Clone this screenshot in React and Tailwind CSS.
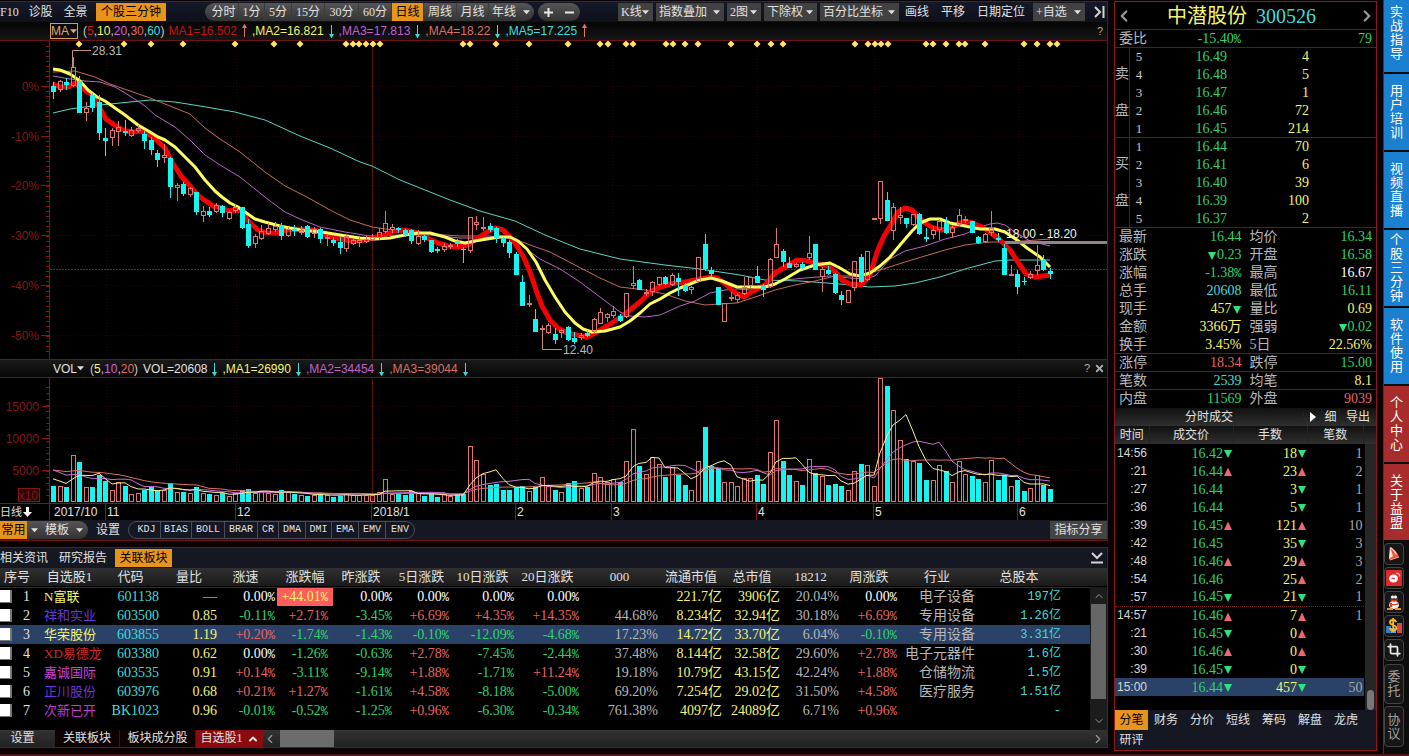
import { ChevronLeft, ChevronRight, ChevronUp, ChevronDown, Crop, X } from 'lucide-react';

// [up/down, high, body top, body bottom, low, volume]
const candles = `
d 82 86 92 99 16|u 80 81 90 92 16|d 78 82 85 90 15|u 57 67 86 87 47|d 76 81 113 113 40|u 102 108 113 121 15
d 93 95 108 112 15|d 95 102 133 140 27|d 128 138 141 156 21|u 128 130 138 146 12|u 121 127 132 146 20|d 120 131 133 136 16
u 127 130 136 137 8|u 125 128 131 133 9|d 131 134 141 149 12|d 137 140 150 155 15|d 150 153 160 167 12|u 144 155 158 163 12
d 157 158 187 198 19|u 183 185 188 201 10|d 182 184 194 196 10|u 187 188 195 197 9|d 192 192 212 215 15|u 206 211 216 222 9
d 207 211 215 217 8|u 203 205 212 213 7|d 205 206 213 217 9|u 210 212 219 220 6|u 204 207 211 213 9|d 207 207 228 229 12
d 219 224 246 248 13|u 234 236 244 248 9|u 225 231 239 240 11|u 223 228 234 235 9|u 222 226 230 232 8|d 223 225 236 240 12
u 227 229 236 237 10|d 225 229 231 236 8|u 226 230 233 235 7|d 225 226 237 238 6|u 227 229 234 238 7|d 228 229 239 243 9
u 234 237 239 246 7|d 237 240 243 246 5|d 237 242 248 254 6|u 235 236 249 252 9|u 238 240 244 245 7|u 237 240 243 247 7
u 236 239 242 243 7|u 234 237 240 241 7|u 228 232 238 240 10|u 211 223 232 233 23|u 224 227 230 233 8|d 227 228 230 233 8
d 229 230 235 237 7|d 229 230 241 244 11|u 230 236 244 245 9|d 235 236 240 242 6|d 240 240 252 253 8|d 247 249 251 253 5
u 243 246 250 252 8|u 243 245 247 249 6|d 239 241 244 247 8|d 247 249 250 263 8|u 217 217 251 253 56|u 216 222 225 230 42
u 217 227 229 231 28|d 223 226 230 232 17|d 227 228 238 243 18|d 237 238 243 247 12|d 240 242 253 258 12|d 252 254 275 275 15
d 275 282 306 306 16|u 295 303 305 307 11|d 309 319 332 332 15|u 325 328 329 333 25|u 323 325 333 334 16|d 328 334 340 344 12
u 329 330 333 338 10|d 326 327 340 341 19|d 332 338 342 344 21|u 333 335 338 340 14|d 330 333 336 337 15|u 318 319 332 333 29
u 308 312 324 324 25|u 313 314 318 322 20|u 306 311 316 318 23|d 314 316 321 322 20|u 293 293 317 318 41|u 266 283 286 289 73
d 279 280 290 290 36|u 289 292 294 296 28|u 281 282 292 296 45|u 277 277 285 286 38|d 276 277 284 285 25|u 273 275 285 286 35
d 273 278 282 296 27|d 283 285 291 292 17|u 286 287 290 294 12|u 257 257 282 282 41|d 234 244 269 271 75|d 267 270 274 276 36
d 287 287 305 305 34|u 303 303 322 322 20|u 292 297 299 301 20|u 293 295 300 303 16|u 277 287 294 295 24|u 277 277 286 288 24
d 266 276 283 283 27|d 284 286 290 297 18|u 258 259 287 288 50|u 228 244 258 258 82|d 249 251 262 267 41|d 257 263 268 268 27
u 263 264 267 268 21|d 262 264 268 269 17|u 236 253 258 260 43|d 244 244 270 270 29|u 267 269 277 292 26|d 266 270 274 275 17
d 273 274 293 294 18|d 291 295 300 305 16|u 290 290 303 303 12|u 261 261 288 291 31|d 254 257 282 283 38|u 251 251 280 281 37
u 218 218 219 219 16|u 181 181 219 224 124|d 192 200 221 221 116|u 203 207 231 240 92|u 207 215 218 224 62|d 218 218 224 228 43
u 214 214 225 226 41|d 213 214 234 235 39|d 228 237 239 242 22|u 226 230 235 239 22|u 219 221 230 240 37|d 217 223 233 234 31
u 225 227 233 238 20|u 209 215 225 226 41|u 216 219 221 223 28|d 221 221 233 233 26|d 236 237 243 244 23|u 233 234 242 243 20
u 211 228 233 236 42|d 233 238 240 242 22|d 244 248 275 275 27|u 265 274 275 276 16|d 270 274 287 294 22|d 277 281 282 285 11
u 271 274 278 279 14|u 245 265 271 275 27|d 255 260 270 271 17|d 268 271 274 279 13`
  .trim()
  .split(/[|\n]/)
  .map((row, i) => {
    const [dir, ...n] = row.split(' ');
    const [high, top, bottom, low, vol] = n.map(Number);
    return { x: Math.round(53 + 6.515 * i), up: dir === 'u', high, top, bottom, low, vol };
  });

const priceLines = [
  { color: '#58d6c4', width: 1, points: '53,113 70,109 85,107 100,105 130,102 150,100 175,102 200,106 235,112 265,120 300,136 330,148 360,162 372,166 400,180 420,188 450,200 480,211 515,221 545,235 580,249 620,259 665,265 700,269 740,275 765,280 800,281 840,284 870,287 895,286 915,283 940,277 965,269 995,261 1010,260 1050,260' },
  { color: '#c86a5e', width: 1, points: '53,72 75,71 95,77 110,84 130,91 150,98 165,104 190,114 205,128 220,139 240,152 265,172 285,186 305,196 330,210 350,220 372,227 400,231 430,234 460,236 490,236 515,239 530,245 550,252 575,265 600,278 620,287 645,290 665,294 685,301 705,305 720,304 737,303 755,297 775,290 795,285 815,281 835,276 860,276 880,270 905,262 925,256 945,250 965,245 990,242 1010,242 1050,239' },
  { color: '#b765c6', width: 1, points: '53,76 70,79 85,81 100,82 115,87 130,96 145,106 155,115 175,127 190,140 205,155 220,165 240,177 255,189 270,201 285,212 300,219 320,227 345,232 370,236 400,235 430,235 460,238 480,238 500,236 512,238 525,248 540,259 560,269 580,282 600,297 620,312 630,316 645,317 660,315 680,306 695,301 710,293 725,290 738,289 750,290 765,288 785,280 805,278 830,276 850,278 865,279 875,276 890,259 905,251 925,246 945,239 965,234 980,227 990,224 997,223 1005,225 1015,232 1030,241 1050,246' },
  { color: '#f50000', width: 5, points: '53,84 60,87 68,87 75,83 82,88 92,95 97,103 102,112 106,119 113,124 119,128 126,131 133,132 140,131 147,133 155,139 165,148 172,162 181,176 191,187 196,193 200,197 206,201 213,206 222,208 229,211 235,210 242,211 248,221 258,230 267,233 277,233 287,230 295,229 305,230 315,230 327,236 340,239 352,241 365,240 372,238 382,236 395,231 405,230 418,233 427,238 438,243 448,246 458,247 468,245 478,238 487,232 495,228 503,230 510,237 517,246 524,258 530,272 536,290 542,306 550,320 558,328 567,333 577,335 587,337 597,332 607,326 618,319 630,310 641,301 650,292 660,287 670,284 685,282 700,279 710,277 717,278 727,285 734,292 744,297 755,290 765,285 775,273 785,267 797,260 808,261 818,264 828,266 835,272 842,280 850,284 861,285 870,275 877,252 884,236 892,223 898,212 905,208 912,210 918,217 925,223 933,228 942,230 952,227 960,223 970,222 982,227 990,232 1000,240 1010,250 1018,262 1026,274 1035,277 1050,275' },
  { color: '#ffff60', width: 3, points: '53,69 60,70 70,74 80,81 88,90 97,97 105,101 115,108 125,115 138,125 150,132 158,137 165,140 175,147 185,157 195,167 205,180 215,191 222,197 230,203 238,207 245,212 255,219 265,222 280,226 300,230 322,232 340,235 360,238 375,239 390,238 405,235 418,233 430,233 445,237 455,241 465,243 475,241 487,239 500,237 510,237 518,241 527,249 536,262 545,280 555,297 565,312 575,323 583,329 592,332 605,331 620,327 630,321 640,313 650,304 660,299 670,293 680,288 690,284 700,280 711,278 722,281 737,287 750,287 765,287 775,284 785,279 800,270 815,265 830,263 840,268 850,274 860,276 870,273 880,266 890,257 900,245 912,231 920,223 930,219 940,219 950,223 965,226 980,229 995,229 1005,232 1017,240 1027,248 1040,257 1050,267' },
];

// volumes before the first visible day, so the averages start at the left edge
const earlier = [32, 32, 32, 32, 32, 32, 32, 32, 32, 32, 41, 41, 41, 41, 40, 28, 26, 24, 22];
const volumes = [...earlier, ...candles.map((c) => c.vol)];

const volumeAverage = (days) =>
  candles
    .map((c, i) => {
      const end = i + earlier.length + 1;
      const sum = volumes.slice(end - days, end).reduce((a, b) => a + b, 0);
      return `${c.x},${(502 - sum / days).toFixed(1)}`;
    })
    .join(' ');

const diamonds = [79, 124, 151, 183, 235, 274, 300, 346, 353, 359, 366, 373, 380, 463, 470, 496, 529, 568, 600, 608, 626, 633, 666, 673, 685, 698, 731, 757, 771, 783, 855, 868, 875, 881, 888, 926, 933, 946, 959, 965, 985, 1024, 1037, 1050, 1057];
const months = [[54, '2017/10'], [107, '11'], [237, '12'], [373, '2018/1'], [517, '2'], [613, '3'], [758, '4'], [875, '5'], [1019, '6']];
const percents = [[86, '0%'], [136, '-10%'], [185, '-20%'], [235, '-30%'], [285, '-40%'], [335, '-50%']];

const periods = [
  ['分时', 'w-[34px]'], ['1分', 'w-[26px]'], ['5分', 'w-[27px]'], ['15分', 'w-[33px]'],
  ['30分', 'w-[34px]'], ['60分', 'w-[33px]'], ['日线', 'w-8'], ['周线', 'w-[33px]'], ['月线', 'w-8'],
];
const indicators = [
  ['KDJ', 'w-[31px]'], ['BIAS', 'w-[31px]'], ['BOLL', 'w-[33px]'], ['BRAR', 'w-[33px]'], ['CR', 'w-[21px]'],
  ['DMA', 'w-[27px]'], ['DMI', 'w-[26px]'], ['EMA', 'w-[27px]'], ['EMV', 'w-[27px]'], ['ENV', 'w-[29px]'],
];

const columns = [
  ['量比', 'w-[58px]'], ['涨速', 'w-[55px]'], ['涨跌幅', 'w-14'], ['昨涨跌', 'w-16'], ['5日涨跌', 'w-[57px]'],
  ['10日涨跌', 'w-[65px]'], ['20日涨跌', 'w-[65px]'], ['000', 'w-[79px]'], ['流通市值', 'w-16'], ['总市值', 'w-[58px]'],
  ['18212', 'w-[59px]'], ['周涨跌', 'w-[58px]'], ['行业', 'w-[78px]'], ['总股本', 'w-[86px]'],
];

const stocks = [
  ['N富联', 'text-[#f4f470]', '601138', '—', '0.00%', '+44.01%', '0.00%', '0.00%', '0.00%', '0.00%', '', '221.7亿', '3906亿', '20.04%', '0.00%', '电子设备', '197亿'],
  ['祥和实业', 'text-[#6a35d8]', '603500', '0.85', '-0.11%', '+2.71%', '-3.45%', '+6.69%', '+4.35%', '+14.35%', '44.68%', '8.234亿', '32.94亿', '30.18%', '+6.69%', '专用设备', '1.26亿'],
  ['华荣股份', 'text-[#f4f470]', '603855', '1.19', '+0.20%', '-1.74%', '-1.43%', '-0.10%', '-12.09%', '-4.68%', '17.23%', '14.72亿', '33.70亿', '6.04%', '-0.10%', '专用设备', '3.31亿'],
  ['XD易德龙', 'text-[#d02a2a]', '603380', '0.62', '0.00%', '-1.26%', '-0.63%', '+2.78%', '-7.45%', '-2.44%', '37.48%', '8.144亿', '32.58亿', '29.60%', '+2.78%', '电子元器件', '1.6亿'],
  ['嘉诚国际', 'text-[#d040d8]', '603535', '0.91', '+0.14%', '-3.11%', '-9.14%', '+1.88%', '-1.71%', '+11.24%', '19.18%', '10.79亿', '43.15亿', '42.24%', '+1.88%', '仓储物流', '1.5亿'],
  ['正川股份', 'text-[#6a35d8]', '603976', '0.68', '+0.21%', '+1.27%', '-1.61%', '+4.58%', '-8.18%', '-5.00%', '69.20%', '7.254亿', '29.02亿', '31.50%', '+4.58%', '医疗服务', '1.51亿'],
  ['次新已开', 'text-[#c03ad0]', 'BK1023', '0.96', '-0.01%', '-0.52%', '-1.25%', '+0.96%', '-6.30%', '-0.34%', '761.38%', '4097亿', '24089亿', '6.71%', '+0.96%', '', '-'],
];

const asks = [['5', '16.49', '4'], ['4', '16.48', '5'], ['3', '16.47', '1'], ['2', '16.46', '72'], ['1', '16.45', '214']];
const bids = [['1', '16.44', '70'], ['2', '16.41', '6'], ['3', '16.40', '39'], ['4', '16.39', '100'], ['5', '16.37', '2']];

const GREEN = 'text-[#2fd36c]';
const RED = 'text-[#e86464]';
const YELLOW = 'text-[#f4f470]';
const CYAN = 'text-[#3fdcdc]';

const stats = [
  ['最新', '16.44', GREEN, '均价', '16.34', GREEN],
  ['涨跌', '▼0.23', GREEN, '开盘', '16.58', GREEN],
  ['涨幅', '-1.38%', GREEN, '最高', '16.67', 'text-white'],
  ['总手', '20608', CYAN, '最低', '16.11', GREEN],
  ['现手', '457▼', YELLOW, '量比', '0.69', YELLOW],
  ['金额', '3366万', YELLOW, '强弱', '▼0.02', GREEN],
  ['换手', '3.45%', YELLOW, '5日', '22.56%', YELLOW],
  ['涨停', '18.34', RED, '跌停', '15.00', GREEN],
  ['笔数', '2539', CYAN, '均笔', '8.1', YELLOW],
  ['内盘', '11569', GREEN, '外盘', '9039', RED],
];

const trades = [
  ['14:56', '16.42', 'd', '18', 'd', '1'],
  [':21', '16.44', 'u', '23', 'u', '2'],
  [':27', '16.44', '', '3', 'd', '1'],
  [':36', '16.44', '', '5', 'd', '1'],
  [':39', '16.45', 'u', '121', 'u', '10'],
  [':42', '16.45', '', '35', 'd', '3'],
  [':48', '16.46', 'u', '29', 'u', '3'],
  [':54', '16.46', '', '25', 'u', '2'],
  [':57', '16.45', 'd', '21', 'd', '1'],
  ['14:57', '16.46', 'u', '7', 'u', '1'],
  [':21', '16.45', 'd', '0', 'u', ''],
  [':30', '16.46', 'u', '0', 'u', ''],
  [':39', '16.45', 'd', '0', 'd', ''],
  ['15:00', '16.44', 'd', '457', 'd', '50'],
];

function tone(value) {
  if (value.startsWith('+')) return RED;
  if (value.startsWith('-')) return GREEN;
  return 'text-white';
}

// narrow percent sign used by the change columns
function Change({ value }) {
  return (
    <>
      {value.replace('%', '')}
      <span className="font-['Liberation_Mono',monospace] text-xs">%</span>
    </>
  );
}

function Tri({ dir }) {
  if (!dir) return <span className="inline-block w-2.5" />;
  return (
    <svg viewBox="0 0 10 10" className="inline-block w-2.5 h-2.5">
      {dir === 'u' ? <path d="M5 0.5 9 9H1z" fill="#e86a70" /> : <path d="M1 1h8L5 9z" fill="#2fe37c" />}
    </svg>
  );
}

function Caret({ className = '' }) {
  return (
    <svg viewBox="0 0 8 5" className={`w-[7px] h-[5px] pointer-events-none ${className}`}>
      <path d="M0 0h8L4 4.5z" fill="currentColor" />
    </svg>
  );
}

function Drop({ text, className }) {
  return (
    <span className={`relative flex items-center h-[18px] ${className}`}>
      <select aria-label={text} className="appearance-none w-full bg-transparent pl-[3px] leading-[18px] outline-none">
        <option>{text}</option>
      </select>
      <Caret className="absolute right-1" />
    </span>
  );
}

function Trend({ up }) {
  return (
    <svg viewBox="0 0 15 16" className="w-[15px] h-4">
      <g transform={up ? undefined : 'rotate(180 7.5 8)'} stroke={up ? '#e07070' : '#40d8d8'} fill={up ? '#e07070' : '#40d8d8'}>
        <path d="M7.5 3v11" fill="none" />
        <path d="M7.5 0.5 10 5H5z" stroke="none" />
      </g>
    </svg>
  );
}

function Toolbar() {
  return (
    <div className="flex items-center h-5 overflow-hidden bg-gradient-to-b from-[#151827] to-[#0e101b] text-xs text-[#e0e0e0] whitespace-nowrap">
      <button className="w-[18px]">F10</button>
      <button className="w-[45px]">诊股</button>
      <button className="w-[25px]">全景</button>
      <button className="ml-2 w-[70px] h-[18px] bg-[#e8941c] text-black">个股三分钟</button>
      <div className="ml-[39px] flex items-center h-[18px] rounded-full bg-gradient-to-b from-[#555] to-[#333]">
        {periods.map(([name, width]) => (
          <button
            key={name}
            className={`${width} h-[18px] border-r border-[#3c3c3c] ${name === '日线' ? 'bg-[#e8941c] text-black' : ''} ${name === '分时' ? 'pl-1' : ''}`}
          >
            {name}
          </button>
        ))}
        <Drop text="年线" className="w-[45px]" />
      </div>
      <div className="ml-1 flex items-center w-[42px] h-[18px] rounded-full bg-gradient-to-b from-[#555] to-[#333]">
        <button aria-label="放大" className="flex-1">
          <svg viewBox="0 0 9 9" className="w-[9px] h-[9px] mx-auto"><path d="M4.500 0v9M0 4.500h9" stroke="#e8e8e8" strokeWidth="2" /></svg>
        </button>
        <button aria-label="缩小" className="flex-1">
          <svg viewBox="0 0 9 9" className="w-[9px] h-[9px] mx-auto"><path d="M0 4.500h9" stroke="#e8e8e8" strokeWidth="2" /></svg>
        </button>
      </div>
      <div className="ml-auto flex items-center gap-[3px] [&>span]:bg-[#414141]">
        <Drop text="K线" className="w-[35px]" />
        <Drop text="指数叠加" className="w-[68px]" />
        <Drop text="2图" className="w-[34px]" />
        <Drop text="下除权" className="w-[53px]" />
        <Drop text="百分比坐标" className="w-[79px]" />
      </div>
      <button className="w-9 text-center">画线</button>
      <button className="w-9 text-center">平移</button>
      <button className="w-[60px] text-center">日期定位</button>
      <Drop text="+自选" className="ml-0.5 w-[52px] bg-[#414141]" />
      <button aria-label="收起" className="ml-2 mr-0.5">
        <svg viewBox="0 0 12 12" className="w-3 h-3">
          <path d="M2 1l5 5-5 5M10.5 0v12" stroke="#d4d4d4" strokeWidth="2" fill="none" />
        </svg>
      </button>
    </div>
  );
}

const plain = 'text-[#c8c8c8]';

function PriceHeader() {
  return (
    <div className="flex items-center h-[19px] pl-[50px] pr-1 border-b border-[#6e1416] bg-gradient-to-b from-[#060606] to-[#161616] font-['Liberation_Sans',sans-serif] text-xs whitespace-nowrap">
      <span className="relative flex items-center w-7 h-4 border border-[#d89a5c] text-[#d8a878]">
        <select aria-label="指标" className="appearance-none w-full bg-transparent leading-[14px] outline-none"><option>MA</option></select>
        <Caret className="absolute right-0" />
      </span>
      <span className={`ml-[5px] ${plain}`}>
        (<span className="text-[#d01818]">5</span>,<span className={YELLOW}>10</span>,<span className="text-[#d060e0]">20</span>,
        <span className={RED}>30</span>,<span className={CYAN}>60</span>)
      </span>
      <span className="ml-1 text-[#c01414]">MA1=16.502</span><Trend up />
      <span className={YELLOW}>,MA2=16.821</span><Trend />
      <span className="text-[#c060d0]">,MA3=17.813</span><Trend />
      <span className="text-[#d87068]">,MA4=18.22</span><Trend />
      <span className={CYAN}>,MA5=17.225</span><Trend up />
      <button aria-label="帮助" className="ml-auto text-[#aaa] text-[11px]">?</button>
    </div>
  );
}

function PriceChart() {
  return (
    <svg viewBox="0 41 1107 318" className="block w-full font-['Liberation_Sans',sans-serif] text-xs">
      <g stroke="#240606" strokeDasharray="1 2">
        {percents.map(([y]) => <path key={y} d={`M50 ${y + 0.5}H1107`} />)}
        {months.slice(1).map(([x]) => <path key={x} d={`M${x - 0.5} 41V359`} />)}
      </g>
      <path d="M372.5 41V359" stroke="#5c1014" />
      <path d="M50 269.5H1107" stroke="#8a1c1c" strokeDasharray="2 1" />
      <g stroke="#8a1214">
        <path d="M49.5 41V359" />
        {Array.from({ length: 62 }, (_, i) => <path key={i} d={`M46 ${46.5 + i * 5}h3`} />)}
        {percents.map(([y]) => <path key={y} d={`M41 ${y + 0.5}h8`} />)}
      </g>
      <g fill="#8a1618" textAnchor="end">
        {percents.map(([y, label]) => <text key={y} x="39" y={y + 5}>{label}</text>)}
      </g>
      {priceLines.map((line) => (
        <polyline key={line.color} points={line.points} fill="none" stroke={line.color} strokeWidth={line.width} strokeLinejoin="round" />
      ))}
      <path d="M1005 242.5H1107" stroke="#8f868b" strokeWidth="3" />
      <g shapeRendering="crispEdges">
        {candles.map((c) =>
          c.up ? (
            <g key={c.x} stroke="#e07470" fill="none">
              <path d={`M${c.x + 0.5} ${c.high}V${c.top}M${c.x + 0.5} ${c.bottom}V${c.low}`} />
              <rect x={c.x - 1.5} y={c.top + 0.5} width="4" height={Math.max(c.bottom - c.top - 1, 0.5)} />
            </g>
          ) : (
            <g key={c.x} fill="#14f4f0">
              <rect x={c.x} y={c.high} width="1" height={c.low - c.high} />
              <rect x={c.x - 2} y={c.top} width="5" height={c.bottom - c.top} />
            </g>
          )
        )}
      </g>
      <path d="M72.5 67V50.5H91" stroke="#c88a84" fill="none" />
      <path d="M542.5 330V349.5H562" stroke="#c88a84" fill="none" />
      <g fill="#b9b9b9">
        <text x="92" y="55">28.31</text>
        <text x="563" y="354">12.40</text>
      </g>
      <text x="1006" y="238" fill="#f0f0f0">18.00 - 18.20</text>
      {diamonds.map((x) => <path key={x} d={`M${x} 40.5l3.5 3.5-3.5 3.5-3.5-3.5z`} fill="#ffe566" />)}
    </svg>
  );
}

function VolumeHeader() {
  return (
    <div className="flex items-center h-[19px] pl-[51px] pr-0.5 border-y border-[#6e1416] bg-gradient-to-b from-[#1a1a1a] to-[#080808] font-['Liberation_Sans',sans-serif] text-xs text-[#e0e0e0] whitespace-nowrap">
      <span className="relative flex items-center w-[33px]">
        <select aria-label="指标" className="appearance-none w-full bg-transparent pl-0.5 leading-4 outline-none"><option>VOL</option></select>
        <Caret className="absolute right-0" />
      </span>
      <span className={`ml-1.5 ${plain}`}>
        (<span className={YELLOW}>5</span>,<span className="text-[#d060e0]">10</span>,<span className={RED}>20</span>)
      </span>
      <span className="ml-[5px]">VOL=20608</span><Trend />
      <span className={YELLOW}>,MA1=26990</span><Trend />
      <span className="text-[#c060d0]">,MA2=34454</span><Trend />
      <span className="text-[#d87068]">,MA3=39044</span><Trend />
      <button aria-label="帮助" className="ml-auto text-[#aaa] text-[11px]">?</button>
      <button aria-label="关闭" className="ml-1 text-[#aaa]"><X size={11} strokeWidth={4} /></button>
    </div>
  );
}

function VolumeChart() {
  return (
    <svg viewBox="0 378 1107 142" className="block w-full font-['Liberation_Sans',sans-serif] text-xs">
      <g stroke="#240606" strokeDasharray="1 2">
        {[406, 438, 470].map((y) => <path key={y} d={`M50 ${y + 0.5}H1107`} />)}
        {months.slice(1).map(([x]) => <path key={x} d={`M${x - 0.5} 378V503`} />)}
      </g>
      <path d="M372.5 378V503" stroke="#5c1014" />
      <g stroke="#8a1214">
        <path d="M49.5 378V520M0 503.5H1107" fill="none" />
        {Array.from({ length: 19 }, (_, i) => <path key={i} d={`M46 ${387.5 + i * 6}h3`} />)}
        {[406, 438, 470].map((y) => <path key={y} d={`M42 ${y + 0.5}h7`} />)}
        {months.slice(1).map(([x]) => <path key={x} d={`M${x - 1.5} 504V520`} />)}
        <rect x="18.500" y="488.500" width="21" height="13" fill="#2a0506" />
      </g>
      <g fill="#8a1618" textAnchor="end">
        <text x="39" y="411">15000</text>
        <text x="39" y="443">10000</text>
        <text x="39" y="475">5000</text>
        <text x="38" y="500">x10</text>
      </g>
      <g shapeRendering="crispEdges">
        {candles.map((c) =>
          c.up ? (
            <rect key={c.x} x={c.x - 1.5} y={502.5 - c.vol} width="4" height={c.vol - 1} fill="none" stroke="#e07470" />
          ) : (
            <rect key={c.x} x={c.x - 2} y={502 - c.vol} width="5" height={c.vol} fill="#14f4f0" />
          )
        )}
      </g>
      <g fill="none">
        <polyline points={volumeAverage(20)} stroke="#d87068" />
        <polyline points={volumeAverage(10)} stroke="#cc6ad8" />
        <polyline points={volumeAverage(5)} stroke="#f6f090" />
      </g>
      <g fill="#e0e0e0">
        {months.map(([x, label]) => <text key={x} x={x} y="516">{label}</text>)}
        <text x="0" y="516" className="font-['Noto_Sans_CJK_SC',sans-serif] text-[11px]">日线</text>
        <path d="M26 507h3v5h3l-4.500 5-4.500-5h3z" fill="#fff" />
      </g>
    </svg>
  );
}

function IndicatorBar() {
  return (
    <div className="flex items-center h-[21px] border-b border-[#6e1416] bg-[#151823] text-xs text-[#e0e0e0] whitespace-nowrap">
      <button className="w-[27px] h-[18px] bg-[#e8941c] text-black">常用</button>
      <div className="flex items-center h-[18px] w-[61px] pl-1 rounded-r-full bg-gradient-to-b from-[#555] to-[#333]">
        <Caret />
        <Drop text="模板" className="ml-1 w-[45px]" />
      </div>
      <button className="ml-2">设置</button>
      <div className="ml-2 flex h-[18px] border border-[#4a4d58] rounded-full font-['Liberation_Mono',monospace] text-[10px]">
        {indicators.map(([name, width], i) => (
          <button key={name} className={`${width} ${i ? 'border-l border-[#4a4d58]' : 'pl-1'}`}>{name}</button>
        ))}
      </div>
      <button className="ml-auto w-[57px] h-[18px] bg-[#444]">指标分享</button>
    </div>
  );
}

function StockRow({ stock, index }) {
  const [name, nameColor, code, ratio, speed, change, yesterday, d5, d10, d20, custom, floatCap, cap, score, week, sector, shares] = stock;
  return (
    <tr className={`h-[19px] ${index === 2 ? 'bg-[#2a4168]' : ''}`}>
      <td>
        <input type="checkbox" aria-label={name} className="block appearance-none w-3 h-[13px] bg-white border-r-2 border-b border-[#777]" />
      </td>
      <td className="pr-1 text-[#e0e0e0]">{index + 1}</td>
      <td className={`pl-2.5 text-left text-[13px] ${nameColor}`}>{name}</td>
      <td className={`pr-[5px] ${CYAN}`}>{code}</td>
      <td className={`pr-[5px] ${YELLOW}`}>{ratio}</td>
      <td className={`pr-0.5 ${tone(speed)}`}><Change value={speed} /></td>
      <td className={`pr-[5px] ${index === 0 ? 'bg-[#ff5c5c] text-[#f4f470]' : tone(change)}`}><Change value={change} /></td>
      {[yesterday, d5, d10, d20].map((value, i) => (
        <td key={i} className={`pr-[5px] ${tone(value)}`}><Change value={value} /></td>
      ))}
      <td className="pr-[5px] text-[#b8b8b8]">{custom}</td>
      <td className={`pr-[5px] ${YELLOW}`}>{floatCap}</td>
      <td className={`pr-[5px] ${YELLOW}`}>{cap}</td>
      <td className="pr-[5px] text-[#b8b8b8]">{score}</td>
      <td className={`pr-[5px] ${tone(week)}`}><Change value={week} /></td>
      <td className="pr-[5px] text-[#b8b8b8]">{sector}</td>
      <td className={`pr-[5px] font-['Liberation_Mono','Noto_Sans_CJK_SC',monospace] text-xs ${CYAN}`}>{shares}</td>
      <td />
    </tr>
  );
}

function StockList() {
  return (
    <section className="mt-1.5 border-y border-r border-[#6e1416] bg-black">
      <div className="flex items-center h-5 bg-[#151823] text-xs text-[#e0e0e0]">
        <button className="w-12 text-left">相关资讯</button>
        <button className="ml-[11px] w-12">研究报告</button>
        <button className="ml-2 w-[57px] h-[18px] bg-[#e8941c] text-black">关联板块</button>
        <button aria-label="折叠" className="ml-auto mr-1">
          <svg viewBox="0 0 12 12" className="w-3 h-3"><path d="M1 1l5 5 5-5M0 10.500h12" stroke="#d4d4d4" strokeWidth="2" fill="none" /></svg>
        </button>
      </div>
      <div className="relative h-[162px] pr-[17px] overflow-hidden bg-gradient-to-b from-[#303030] to-[#1a1a1a] bg-[length:100%_18px] bg-no-repeat">
        <table className="w-full table-fixed border-collapse text-sm leading-[18px] text-right whitespace-nowrap">
          <colgroup>
            <col className="w-3" />
            <col className="w-[22px]" />
            <col className="w-[71px]" />
            <col className="w-[59px]" />
            {columns.map(([name, width]) => <col key={name} className={width} />)}
            <col />
          </colgroup>
          <thead>
            <tr className="h-[19px] border-b border-[#6e1416] text-[13px] text-[#e0e0e0] text-center [&>th]:font-normal">
              <th colSpan={2}>序号</th>
              <th>自选股1</th>
              <th><span className="pr-2">代码</span></th>
              {columns.map(([name]) => (
                <th key={name}>{name === '涨跌幅' ? name : <span className="pr-2">{name}</span>}</th>
              ))}
              <th />
            </tr>
          </thead>
          <tbody>
            {stocks.map((stock, i) => <StockRow key={stock[0]} stock={stock} index={i} />)}
          </tbody>
        </table>
        <div className="absolute right-0 top-[19px] bottom-0 w-[17px] flex flex-col items-center bg-[#1c1c1c] text-[#999]">
          <button aria-label="上" className="h-[17px]"><ChevronUp size={12} /></button>
          <div className="w-[15px] h-[95px] bg-[#666]" />
          <button aria-label="下" className="mt-auto h-[19px]"><ChevronDown size={12} /></button>
        </div>
      </div>
      <div className="flex items-center h-[17px] bg-gradient-to-b from-[#333] to-[#222] text-xs leading-[17px] text-[#e0e0e0]">
        <button className="w-[55px] pr-2.5">设置</button>
        <button className="w-[65px] bg-[#0d0303] border-r border-[#4a1010]">关联板块</button>
        <button className="w-[76px] bg-[#0d0303] border-r border-[#4a1010]">板块成分股</button>
        <button className="flex items-center justify-center gap-1 w-[67px] bg-[#8a0c10]">
          自选股1<ChevronUp size={12} strokeWidth={4} />
        </button>
        <button aria-label="左" className="w-[17px] text-[#999]"><ChevronLeft size={14} /></button>
        <div className="w-[54px] h-full bg-[#6c6c6c]" />
        <button aria-label="右" className="ml-auto mr-0.5 text-[#999]"><ChevronRight size={14} /></button>
      </div>
    </section>
  );
}

function Depth({ label, rows }) {
  return (
    <div className="flex h-[90px] border-b border-[#6e1416]">
      <div className="flex flex-col items-center justify-around w-[15px] py-2 border-r border-[#6e1416] text-sm leading-none text-[#b8b8b8]">
        <span>{label}</span>
        <span>盘</span>
      </div>
      <div className="flex-1">
        {rows.map(([level, price, qty]) => (
          <div key={level} className="flex h-[18px] leading-[18px]">
            <span className="w-[18px] text-center text-[13px] text-[#c8c8c8]">{level}</span>
            <span className={`w-[79px] text-right ${GREEN}`}>{price}</span>
            <span className={`w-[82px] text-right ${YELLOW}`}>{qty}</span>
          </div>
        ))}
      </div>
    </div>
  );
}

function Stat({ label, value, color }) {
  const narrow = value === '-1.38%';
  return (
    <div className="flex justify-between">
      <dt className="text-[#b8b8b8]">{label}</dt>
      <dd className={color}>
        {value.startsWith('▼') && <Tri dir="d" />}
        {narrow ? <Change value={value} /> : value.replace('▼', '')}
        {value.endsWith('▼') && <Tri dir="d" />}
      </dd>
    </div>
  );
}

function Quote() {
  return (
    <aside className="mt-px self-start w-[263px] shrink-0 border border-[#8a1a1c] bg-black text-sm">
      <div className="flex items-center justify-between h-7 border-b border-[#6e1416] text-[#999]">
        <button aria-label="上一只"><ChevronLeft size={18} strokeWidth={3} /></button>
        <h1 className="pr-2 text-xl leading-none">
          <span className={YELLOW}>中潜股份</span> <span className={`ml-1 ${CYAN}`}>300526</span>
        </h1>
        <button aria-label="下一只"><ChevronRight size={18} strokeWidth={3} /></button>
      </div>
      <div className="flex h-[18px] px-1 leading-[18px] border-b border-[#6e1416]">
        <span className="text-[#b8b8b8]">委比</span>
        <span className={`w-[94px] text-right ${GREEN}`}><Change value="-15.40%" /></span>
        <span className={`ml-auto ${GREEN}`}>79</span>
      </div>
      <Depth label="卖" rows={asks} />
      <Depth label="买" rows={bids} />
      <div>
        {stats.map(([l1, v1, c1, l2, v2, c2], i) => (
          <dl key={l1} className={`grid grid-cols-2 gap-x-2 h-[18px] px-1 overflow-hidden leading-[18px] ${i > 5 && i < 9 ? 'border-b border-[#6e1416]' : ''}`}>
            <Stat label={l1} value={v1} color={c1} />
            <Stat label={l2} value={v2} color={c2} />
          </dl>
        ))}
      </div>
      <div className="flex items-center h-[18px] bg-gradient-to-b from-[#111] to-[#303030] text-xs text-[#e0e0e0]">
        <h2 className="flex-1 text-center">分时成交</h2>
        <button aria-label="播放" className="w-[18px] border-l border-[#4a1214]">
          <svg viewBox="0 0 8 10" className="w-2 h-2.5 mx-auto"><path d="M1 0l6 5-6 5z" fill="#fff" /></svg>
        </button>
        <button className="w-[18px] border-l border-[#4a1214]">细</button>
        <button className="w-[37px] border-l border-[#4a1214]">导出</button>
      </div>
      <div className="relative h-[284px] pr-3 overflow-hidden bg-gradient-to-b from-[#111] to-[#303030] bg-[length:100%_18px] bg-no-repeat">
        <table className="w-full table-fixed text-right border-collapse">
          <thead>
            <tr className="h-[18px] text-xs leading-[18px] text-[#e0e0e0] text-center [&>th]:font-normal [&>th]:border-r [&>th]:border-[#4a1214]">
              <th className="w-[34px]">时间</th>
              <th className="w-[84px]">成交价</th>
              <th className="w-[74px]">手数</th>
              <th>笔数</th>
            </tr>
          </thead>
          <tbody>
            {trades.map(([time, price, pDir, qty, qDir, count], i) => (
              <tr key={i} className={`h-[18px] leading-[17px] ${i === 13 ? 'bg-[#2a4168]' : ''} ${i === 8 ? 'border-b border-dotted border-[#7a1c1e]' : ''}`}>
                <td className="pr-0.5 font-['Liberation_Sans',sans-serif] text-xs text-[#d8d8d8]">{time}</td>
                <td className={GREEN}>{price}<Tri dir={pDir} /></td>
                <td className={YELLOW}>{qty}<Tri dir={qDir} /></td>
                <td className="pr-px text-[#a8a8a8]">{count}</td>
              </tr>
            ))}
          </tbody>
        </table>
        <div className="absolute right-0 top-[18px] bottom-0 flex items-end justify-center w-[11px] bg-[#262626]">
          <div className="w-[7px] h-5 rounded-full bg-[#777]" />
        </div>
      </div>
      <nav className="flex flex-wrap h-10 bg-[#151823] text-xs text-[#e0e0e0]">
        {['分笔', '财务', '分价', '短线', '筹码', '解盘', '龙虎', '研评'].map((name, i) => (
          <button key={name} className={`h-5 ${i === 0 ? 'w-[33px] bg-[#e8941c] text-black' : i === 7 ? 'w-[33px]' : 'w-9'}`}>{name}</button>
        ))}
      </nav>
    </aside>
  );
}

const toolIcons = {
  提醒: (
    <svg viewBox="0 0 16 16" className="w-4 h-4">
      <path d="M4 1c3 2 8 6 9 10l-3 1-6 2-1-1z" fill="#e4583c" />
      <path d="M4 1l3 9-4 3z" fill="#ffe2d6" />
      <path d="M4.500 1.500c2 1.500 5 4.500 6 7" stroke="#ffc8b4" strokeWidth="1.500" fill="none" />
      <path d="M4 14l9-3" stroke="#ff9a80" />
    </svg>
  ),
  微博: (
    <svg viewBox="0 0 16 16" className="w-4 h-4">
      <rect width="16" height="16" rx="1" fill="#e02828" />
      <ellipse cx="7.500" cy="8.500" rx="4.500" ry="4" fill="#fff" />
      <path d="M5.500 8.500h3.500" stroke="#d85050" strokeWidth="1.500" />
      <path d="M10 3.500c2-.5 4 .5 3.500 3" stroke="#ffb0b0" strokeWidth="1.500" fill="none" />
    </svg>
  ),
  客服: (
    <svg viewBox="0 0 16 16" className="w-4 h-4">
      <ellipse cx="8" cy="5" rx="4" ry="4.500" fill="#4a3a36" />
      <ellipse cx="8" cy="11" rx="5" ry="4" fill="#f4f4f4" />
      <circle cx="6.500" cy="3" r="1.500" fill="#fff" />
      <circle cx="9.500" cy="3" r="1.500" fill="#fff" />
      <path d="M4.500 6h7L8 8zM3 8.500c3 2 7 2 10 0l-.5 2c-3 1-6 1-9 0zM4 9h2v4H4z" fill="#e03a20" />
      <path d="M1 15h6M9 15h6" stroke="#f09030" strokeWidth="2" />
    </svg>
  ),
  理财: (
    <svg viewBox="0 0 16 16" className="w-4 h-4">
      <path d="M0 8h5v7H0z" fill="#2c7fc8" />
      <path d="M5 10h5v5H5z" fill="#5aa0d8" />
      <path d="M11 5h5v10h-5z" fill="#d84848" />
      <path d="M10.500 4C8.500 1 4 1.500 4 4.500S10.500 6.500 10.500 10 5 13 3.500 10M7.200 0v14" stroke="#ffb820" strokeWidth="1.800" fill="none" />
    </svg>
  ),
  截图: <Crop size={14} strokeWidth={3} />,
};

function SideStrip() {
  const links = ['实战指导', '用户培训', '视频直播', '个股三分钟', '软件使用', '个人中心', '关于益盟'];
  const box = 'flex items-center justify-center w-5 border border-[#444] rounded-sm bg-[#161616]';
  return (
    <nav className="w-[26px] shrink-0 border-l border-[#8a1a1c] bg-[#0c0c0c] text-[13px] leading-[14px]">
      {links.map((text, i) => (
        <a
          key={text}
          href="#"
          className={`flex items-center justify-center px-1.5 mb-0.5 text-center text-white ${i === 0 ? 'h-[72px] pb-[7px]' : 'h-[76px]'} ${i > 4 ? 'bg-[#a82c2c]' : 'bg-[#1b80d0]'}`}
        >
          <span className="w-[13px] break-all whitespace-normal">{text}</span>
        </a>
      ))}
      <div className="flex flex-col gap-0.5 mt-[3px]">
        {Object.entries(toolIcons).map(([name, icon]) => (
          <button key={name} aria-label={name} className={`${box} h-[22px] text-[#e8e8e8]`}>{icon}</button>
        ))}
        <button className={`${box} h-10 mt-px text-[#a0a0a0]`}><span className="w-[13px]">委托</span></button>
        <button className={`${box} h-[41px] text-[#a0a0a0]`}><span className="w-[13px]">协议</span></button>
      </div>
    </nav>
  );
}

export default function App() {
  return (
    <div className="flex gap-1.5 min-h-screen overflow-hidden bg-[#0b0203] border-b-2 border-[#4e1418] font-['Liberation_Serif','Noto_Sans_CJK_SC',serif]">
      <main className="flex-1 min-w-0 pt-px">
        <section className="border-t border-r border-[#6e1416] bg-black">
          <Toolbar />
          <PriceHeader />
          <PriceChart />
          <VolumeHeader />
          <VolumeChart />
          <IndicatorBar />
        </section>
        <StockList />
      </main>
      <Quote />
      <SideStrip />
    </div>
  );
}
